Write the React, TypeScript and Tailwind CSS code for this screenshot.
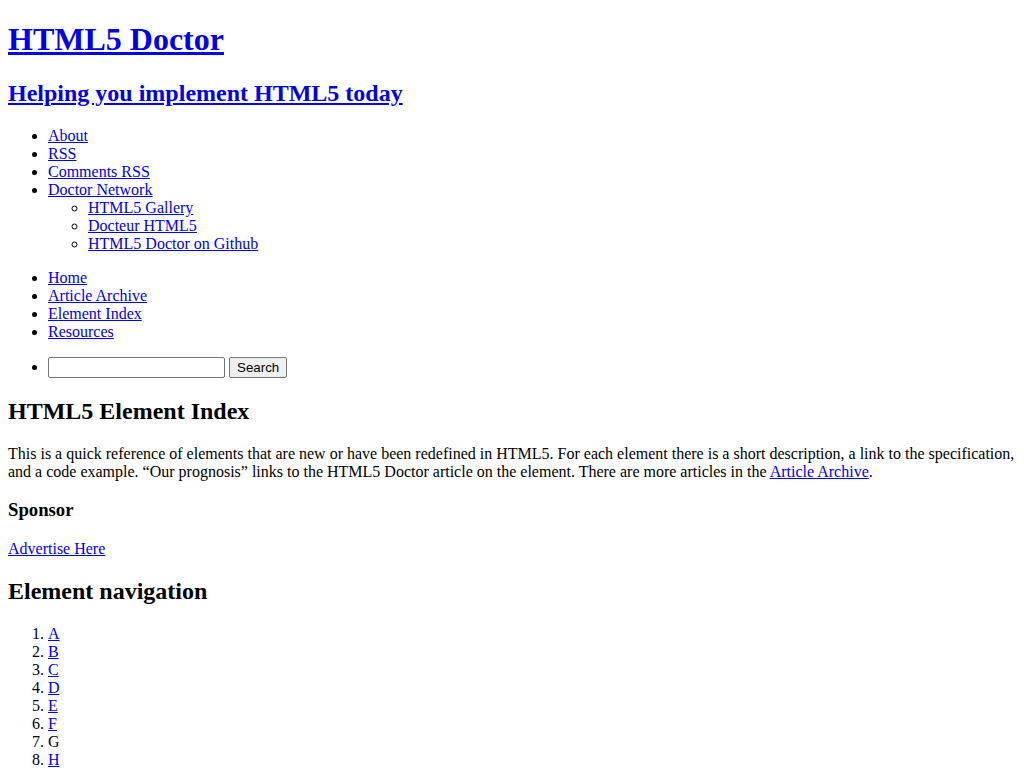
const link = "text-[#0000ee] underline";

const topLinks = ["About", "RSS", "Comments RSS"];
const network = ["HTML5 Gallery", "Docteur HTML5", "HTML5 Doctor on Github"];
const mainNav = ["Home", "Article Archive", "Element Index", "Resources"];
const letters = ["A", "B", "C", "D", "E", "F", "G", "H", "I", "J"];

export default function App() {
	return (
		<div className="m-2 bg-white font-['Liberation_Serif',serif] text-[16px] leading-[normal] text-black">
			<header>
				<h1 className="my-[21.44px] text-[32px] font-bold">
					<a href="#" className={link}>
						HTML5 Doctor
					</a>
				</h1>
				<h2 className="my-[19.92px] text-[24px] font-bold">
					<a href="#" className={link}>
						Helping you implement HTML5 today
					</a>
				</h2>
			</header>

			<ul className="my-4 list-disc pl-10">
				{topLinks.map((t) => (
					<li key={t}>
						<a href="#" className={link}>
							{t}
						</a>
					</li>
				))}
				<li>
					<a href="#" className={link}>
						Doctor Network
					</a>
					<ul className="list-[circle] pl-10">
						{network.map((t) => (
							<li key={t}>
								<a href="#" className={link}>
									{t}
								</a>
							</li>
						))}
					</ul>
				</li>
			</ul>

			<ul className="my-4 list-disc pl-10">
				{mainNav.map((t) => (
					<li key={t}>
						<a href="#" className={link}>
							{t}
						</a>
					</li>
				))}
			</ul>

			<ul className="my-4 list-disc pl-10">
				<li>
					<input
						type="text"
						className="h-[21px] w-[177px] rounded-[2px] border border-[#767676] bg-white px-[2px] py-[1px] align-baseline font-['Liberation_Sans',sans-serif] text-[13.33px]"
					/>{" "}
					<button className="h-[21px] rounded-[2px] border border-[#767676] bg-[#efefef] px-[7px] py-[1px] font-['Liberation_Sans',sans-serif] text-[13.33px] text-black">
						Search
					</button>
				</li>
			</ul>

			<h2 className="my-[19.92px] text-[24px] font-bold">HTML5 Element Index</h2>
			<p className="my-4">
				This is a quick reference of elements that are new or have been redefined in HTML5. For each element
				there is a short description, a link to the specification, and a code example. “Our prognosis” links to
				the HTML5 Doctor article on the element. There are more articles in the{" "}
				<a href="#" className={link}>
					Article Archive
				</a>
				.
			</p>

			<h3 className="my-[18.72px] text-[18.72px] font-bold">Sponsor</h3>
			<p className="my-4">
				<a href="#" className={link}>
					Advertise Here
				</a>
			</p>

			<h2 className="my-[19.92px] text-[24px] font-bold">Element navigation</h2>
			<ol className="my-4 list-decimal pl-10">
				{letters.map((l) => (
					<li key={l}>
						{l === "G" ? (
							l
						) : (
							<a href="#" className={link}>
								{l}
							</a>
						)}
					</li>
				))}
			</ol>
		</div>
	);
}
